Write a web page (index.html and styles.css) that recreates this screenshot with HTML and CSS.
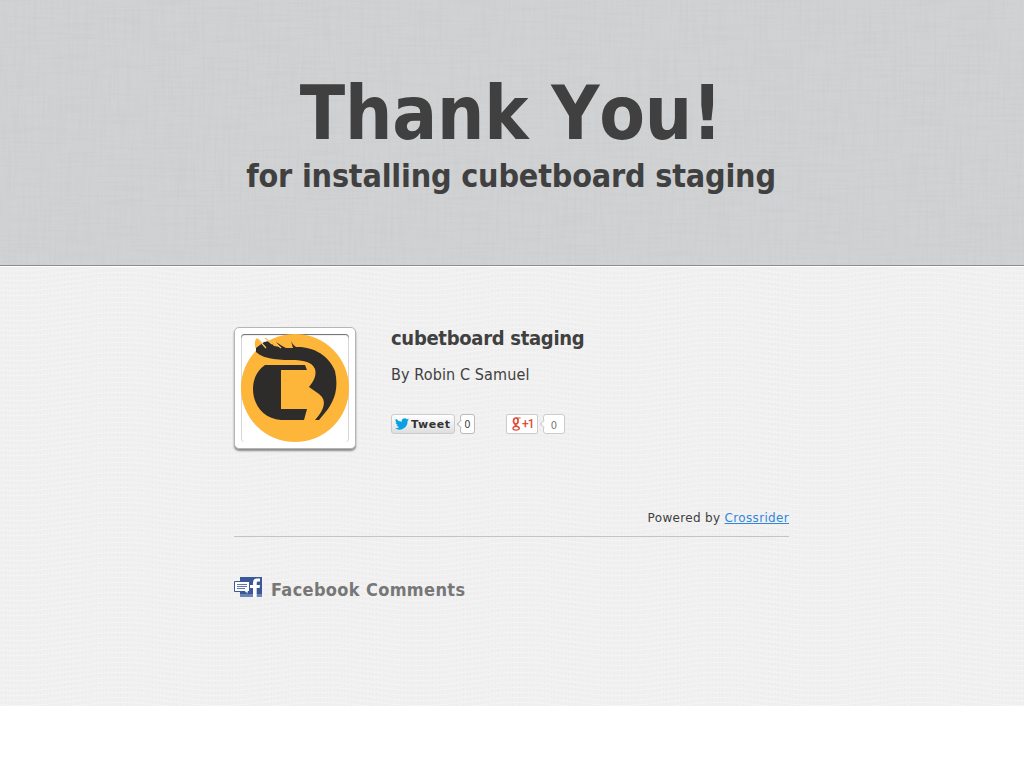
FILE: index.html
```html
<!DOCTYPE html>
<html lang="en">
<head>
<meta charset="utf-8">
<title>Thank You!</title>
<link rel="stylesheet" href="styles.css">
</head>
<body>
<header class="hero">
  <svg class="texture" aria-hidden="true">
    <filter id="lh" x="0" y="0" width="100%" height="100%"><feTurbulence type="fractalNoise" baseFrequency="0.02 0.4" numOctaves="2" seed="4"/><feColorMatrix values="0 0 0 0 .45  0 0 0 0 .48  0 0 0 0 .5  1 0 0 0 -.42"/></filter>
    <filter id="lv" x="0" y="0" width="100%" height="100%"><feTurbulence type="fractalNoise" baseFrequency="0.35 0.02" numOctaves="2" seed="9"/><feColorMatrix values="0 0 0 0 .45  0 0 0 0 .48  0 0 0 0 .5  1 0 0 0 -.42"/></filter>
    <g opacity=".32"><rect width="100%" height="100%" filter="url(#lh)"/><rect width="100%" height="100%" filter="url(#lv)"/></g>
  </svg>
  <h1 class="title">Thank You!</h1>
  <h2 class="subtitle">for installing cubetboard staging</h2>
</header>
<main class="content">
  <svg class="texture" aria-hidden="true">
    <defs>
      <pattern id="waves" width="200" height="5" patternUnits="userSpaceOnUse" x="20" y="1">
        <g fill="none" stroke="#f6f6f6" stroke-width="1">
          <path d="M0 -2.500C40 -2.500 60 -10.500 100 -10.500S160 -2.500 200 -2.500"/>
          <path d="M0 2.500C40 2.500 60 -5.500 100 -5.500S160 2.500 200 2.500"/>
          <path d="M0 7.500C40 7.500 60 -.5 100 -.5S160 7.500 200 7.500"/>
          <path d="M0 12.500C40 12.500 60 4.500 100 4.500S160 12.500 200 12.500"/>
        </g>
      </pattern>
      <pattern id="grain" width="7" height="5" patternUnits="userSpaceOnUse"><path d="M1.500 1v3M5.500 0v3" stroke="#eaeaea" stroke-width="1" opacity=".7"/></pattern>
    </defs>
    <rect width="100%" height="100%" fill="url(#grain)"/><rect width="100%" height="100%" fill="url(#waves)" opacity=".8"/>
  </svg>
  <div class="column">
    <section class="app">
      <div class="thumb">
        <svg class="logo" viewBox="0 0 108 108">
          <circle cx="54" cy="54" r="54" fill="#fdb53a"/>
          <path d="M16 4L23 12L16 17C13 12 13 7 16 4Z" fill="#fdb53a"/>
          <path d="M15 18C24 26 40 26 54 26C63 27 70 27 74 35C76 42 72 48 68 53L78 60C86 66 84 75 74 86H78L87 75C93 66 98 55 94 37C88 21 71 12 55 13C52 11 51 9 50 7L52 14L45 14C41 12 38 10 35 8L39 13L33 12L28 7L23 8L15 14Z" fill="#2d2c2b"/>
          <path d="M24 31H64L66 36H40V75H66L63 86H40C23 85 12 71 12 55C12 44 17 36 24 31Z" fill="#2d2c2b"/>
          <path d="M17 5L25 14M24 4L31 10M32 7L40 14" stroke="#fdc35c" stroke-width="1.300"/>
        </svg>
      </div>
      <div class="details">
        <h3 class="name">cubetboard staging</h3>
        <p class="author">By Robin C Samuel</p>
        <div class="social">
          <span class="tweet"><svg class="bird" viewBox="0 0 24 20"><path d="M24 2.400a10 10 0 0 1-2.800.8A5 5 0 0 0 23.300.5a10 10 0 0 1-3.100 1.200A4.900 4.900 0 0 0 11.800 6.200 14 14 0 0 1 1.700 1a4.900 4.900 0 0 0 1.500 6.600A5 5 0 0 1 1 7a5 5 0 0 0 3.900 4.800 5 5 0 0 1-2.200.1 5 5 0 0 0 4.600 3.400A10 10 0 0 1 0 17.400 14 14 0 0 0 21.500 5c1-.7 1.800-1.600 2.500-2.600z" fill="#0aa1e2"/></svg>Tweet</span>
          <span class="count tweet-count">0</span>
          <span class="plus"><svg class="g" viewBox="0 0 9 14" fill="none" stroke="#dd4b39"><ellipse cx="3.800" cy="4" rx="2.300" ry="3" stroke-width="1.700"/><path d="M4 1H8.600M5.500 1.500L6.500 3" stroke-width="1"/><path d="M4 7C2.500 7.800 3 8.500 4.500 9C6.500 9.800 7.500 10.300 7.300 11.500C7 13.500 1.200 13.700 1 11.500C.9 10 2.500 9.300 4.500 9.200" stroke-width="1.400"/></svg><span class="one">+1</span></span>
          <span class="count plus-count">0</span>
        </div>
      </div>
    </section>
    <p class="powered">Powered by <a class="link" href="#">Crossrider</a></p>
    <h4 class="comments">
      <svg class="fb" viewBox="0 0 28 20"><path d="M6 0h22v20H6z" fill="#3b5998"/><path d="M6 17h22v3H6z" fill="#6d84b4"/><path d="M19 20v-9h-3V8h3V6c0-3.200 1.600-4.500 4.200-4.500H26v3h-1.700c-1.200 0-1.600.6-1.600 1.700V8H26l-.4 3h-2.900v9z" fill="#fff"/><path d="M.5 4.500h15v10H14v3l-3-3H.5z" fill="#fff" stroke="#3b5998"/><path d="M3 7.500h10M3 9.500h10M3 11.500h8" stroke="#6179ab"/></svg>
      <span>Facebook Comments</span>
    </h4>
  </div>
</main>
</body>
</html>
```

FILE: styles.css
```css
* { box-sizing: border-box; }
body { margin: 0; background: #fff; color: #404040; font-family: "DejaVu Sans Condensed", "DejaVu Sans", sans-serif; }
h1, h2, h3, h4, p { margin: 0; }
.hero { position: relative; height: 266px; padding-top: 70px; background: #d1d2d3; border-bottom: 1px solid #8d8d8d; text-align: center; font-stretch: condensed; }
.texture { position: absolute; inset: 0; width: 100%; height: 100%; z-index: 0; }
.title { position: relative; left: -1px; font-size: 74px; line-height: 86px; letter-spacing: -.2px; font-kerning: none; white-space: nowrap; }
.subtitle { position: relative; left: -1px; font-size: 32px; line-height: 40px; letter-spacing: -.19px; white-space: nowrap; }
.content { position: relative; height: 440px; background: #f0f0f0; border-top: 1px solid #fff; }
.column { position: relative; width: 555px; margin-left: 234px; padding-top: 60px; }
.app { display: flex; gap: 35px; height: 176px; font-stretch: condensed; }
.thumb { width: 122px; height: 122px; padding: 6px; border: 1px solid #b5b5b5; border-radius: 5px; background: #fff; box-shadow: 0 2px 2px #8b8b8b; }
.logo { display: block; width: 108px; height: 108px; border-radius: 4px; box-shadow: inset 0 1px 1px #666, inset 1px 0 #e4e4e4, inset -1px 0 #e4e4e4; }
.name { font-size: 20px; line-height: 22px; letter-spacing: -.3px; white-space: nowrap; }
.author { margin-top: 14px; font-size: 16px; line-height: 24px; letter-spacing: .12px; white-space: nowrap; }
.social { display: flex; margin-top: 27px; height: 20px; }
.tweet { display: flex; align-items: center; width: 64px; height: 20px; padding-left: 3px; gap: 2px; border: 1px solid #ccc; border-radius: 3px; background: linear-gradient(#fff, #dedede); color: #333; font: bold 11px "DejaVu Sans", sans-serif; letter-spacing: .6px; }
.bird { width: 14px; height: 12px; flex: none; }
.count { position: relative; height: 20px; margin-left: 5px; border: 1px solid #bbb; border-radius: 3px; background: #fff; text-align: center; }
.count::before { content: ""; position: absolute; left: -3px; top: 6px; width: 5px; height: 5px; background: #fff; border: solid #bbb; border-width: 0 0 1px 1px; transform: rotate(45deg); }
.tweet-count { width: 15px; font-size: 11px; line-height: 19px; }
.plus { display: flex; align-items: center; width: 32px; height: 20px; margin-left: 31px; padding-left: 5px; border: 1px solid #ccc; border-radius: 2px; background: #fff; color: #dd4b39; }
.g { width: 9px; height: 14px; flex: none; }
.one { margin-left: 1px; font: 500 12px Roboto, sans-serif; letter-spacing: -1px; }
.plus-count { width: 22px; border-color: #ccc; color: #777; font: 11px/21px "DejaVu Sans Condensed", "DejaVu Sans", sans-serif; }
.plus-count::before { border-color: #ccc; }
.powered { height: 34px; padding-top: 8px; border-bottom: 1px solid #c4c4c4; text-align: right; font: 12px/14px "DejaVu Sans", sans-serif; letter-spacing: .33px; }
.link { color: #3387db; }
.comments { display: flex; gap: 9px; margin-top: 40px; color: #777; font-size: 18px; line-height: 25px; letter-spacing: .35px; }
.fb { width: 28px; height: 20px; }
```
